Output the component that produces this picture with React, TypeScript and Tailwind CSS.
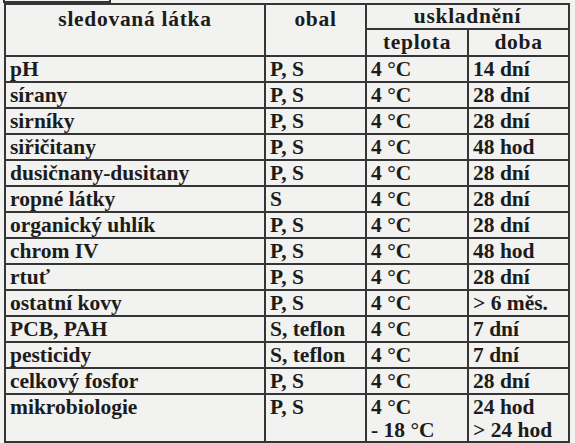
const rows: [string, string, string, string][] = [
  ['pH', 'P, S', '4 °C', '14 dní'],
  ['sírany', 'P, S', '4 °C', '28 dní'],
  ['sirníky', 'P, S', '4 °C', '28 dní'],
  ['siřičitany', 'P, S', '4 °C', '48 hod'],
  ['dusičnany-dusitany', 'P, S', '4 °C', '28 dní'],
  ['ropné látky', 'S', '4 °C', '28 dní'],
  ['organický uhlík', 'P, S', '4 °C', '28 dní'],
  ['chrom IV', 'P, S', '4 °C', '48 hod'],
  ['rtuť', 'P, S', '4 °C', '28 dní'],
  ['ostatní kovy', 'P, S', '4 °C', '> 6 měs.'],
  ['PCB, PAH', 'S, teflon', '4 °C', '7 dní'],
  ['pesticidy', 'S, teflon', '4 °C', '7 dní'],
  ['celkový fosfor', 'P, S', '4 °C', '28 dní'],
];

// each cell draws its own right and bottom rule; the frame draws top and left
const cell = 'h-[26px] px-[4px] flex items-center border-r-2 border-b-2 border-[#353535] whitespace-nowrap';
const head = 'flex justify-center border-r-2 border-b-2 border-[#353535] tracking-[0.7px] whitespace-nowrap';

export default function App() {
  return (
    <div className="w-[575px] h-[443px] overflow-hidden bg-[#f2f2f1] text-[#1c1c1c] font-['Liberation_Serif'] font-bold text-[21.5px] leading-[23px]">
      <div className="ml-[3px] w-[108px] h-[3px] border-x-2 border-b-2 border-[#353535]" />
      <div className="ml-[4px] w-[566px] border-t-2 border-l-2 border-[#353535] grid grid-cols-[260px_101px_102px_101px]">
        <div className={`${head} row-span-2 pt-[3px]`}>sledovaná látka</div>
        <div className={`${head} row-span-2 pt-[3px]`}>obal</div>
        <div className={`${head} col-span-2 h-[25px] items-center`}>uskladnění</div>
        <div className={`${head} h-[27px] items-center`}>teplota</div>
        <div className={`${head} h-[27px] items-center`}>doba</div>
        {rows.map((r) => (
          <div key={r[0]} className="contents">
            <div className={cell}>{r[0]}</div>
            <div className={cell}>{r[1]}</div>
            <div className={cell}>{r[2]}</div>
            <div className={cell}>{r[3]}</div>
          </div>
        ))}
        <div className="h-[48px] px-[4px] pt-[1px] border-r-2 border-b-2 border-[#353535]">mikrobiologie</div>
        <div className="h-[48px] px-[4px] pt-[1px] border-r-2 border-b-2 border-[#353535]">P, S</div>
        <div className="h-[48px] px-[4px] pt-[1px] border-r-2 border-b-2 border-[#353535] flex flex-col">
          <span>4 °C</span>
          <span>- 18 °C</span>
        </div>
        <div className="h-[48px] px-[4px] pt-[1px] border-r-2 border-b-2 border-[#353535] flex flex-col">
          <span>24 hod</span>
          <span>&gt; 24 hod</span>
        </div>
      </div>
    </div>
  );
}
